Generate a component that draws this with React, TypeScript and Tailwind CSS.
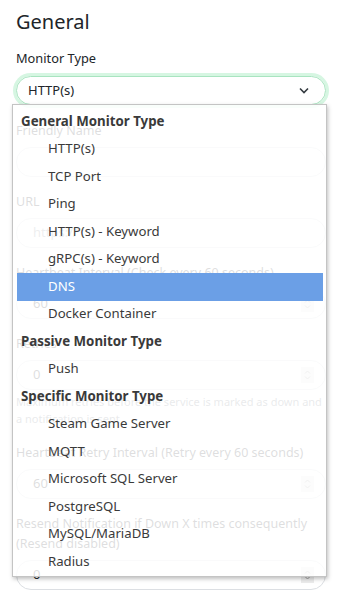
import React from 'react';

type Opt = { label: string; header?: boolean; active?: boolean };

const options: Opt[] = [
  { label: 'General Monitor Type', header: true },
  { label: 'HTTP(s)' },
  { label: 'TCP Port' },
  { label: 'Ping' },
  { label: 'HTTP(s) - Keyword' },
  { label: 'gRPC(s) - Keyword' },
  { label: 'DNS', active: true },
  { label: 'Docker Container' },
  { label: 'Passive Monitor Type', header: true },
  { label: 'Push' },
  { label: 'Specific Monitor Type', header: true },
  { label: 'Steam Game Server' },
  { label: 'MQTT' },
  { label: 'Microsoft SQL Server' },
  { label: 'PostgreSQL' },
  { label: 'MySQL/MariaDB' },
  { label: 'Radius' },
];

function Spinner() {
  return (
    <div className="flex h-[16px] w-[13px] flex-col items-center justify-center bg-[#ececec]">
      <svg width="7" height="12" viewBox="0 0 7 12" fill="none" stroke="#9a9a9a" strokeWidth="1">
        <path d="M1 4.5 3.5 2 6 4.5" />
        <path d="M1 7.5 3.5 10 6 7.5" />
      </svg>
    </div>
  );
}

function Field({ label, value, placeholder, number }: { label: React.ReactNode; value?: string; placeholder?: string; number?: boolean }) {
  return (
    <div className="mb-[15px]">
      <div className="mb-[6px] text-[12.5px] leading-[20px] text-[#212529]">{label}</div>
      <div className="flex h-[30px] items-center justify-between rounded-full border border-[#dcdfe3] pl-[16px] pr-[11px] text-[13px]">
        {value ? <span className="text-[#212529]">{value}</span> : <span className="text-[#8a8f95]">{placeholder}</span>}
        {number && <Spinner />}
      </div>
    </div>
  );
}

export default function App() {
  return (
    <div className="relative h-[600px] w-[342px] overflow-hidden bg-white font-['Noto_Sans',sans-serif]">
      <div className="px-4 pt-[8px]">
        <h1 className="text-[20px] leading-[28px] text-[#212529]">General</h1>

        <div className="mt-[12px] text-[12.8px] leading-[20px] text-[#212529]">Monitor Type</div>
        <div className="mt-[8px] flex h-[29px] items-center justify-between rounded-full border border-[#a9e4c0] pl-[11px] pr-[16px] text-[13px] text-[#212529] shadow-[0_0_0_3px_rgba(92,221,139,0.25)]">
          <span>HTTP(s)</span>
          <svg width="10" height="7" viewBox="0 0 10 7" fill="none" stroke="#343a40" strokeWidth="1.6">
            <path d="M1 1.5 5 5.5 9 1.5" />
          </svg>
        </div>

        <div className="mt-[16px]">
          <Field label="Friendly Name" />
          <Field label="URL" placeholder="https://" />
          <Field label="Heartbeat Interval (Check every 60 seconds)" value="60" number />
          <div className="mb-[16px]">
            <div className="mb-[6px] text-[12.5px] leading-[20px] text-[#212529]">Retries</div>
            <div className="flex h-[30px] items-center justify-between rounded-full border border-[#dcdfe3] pl-[16px] pr-[11px] text-[13px]">
              <span className="text-[#212529]">0</span>
              <Spinner />
            </div>
            <div className="mt-[3px] text-[11px] leading-[17px] text-[#6c757d]">
              Maximum retries before the service is marked as down and a notification is sent
            </div>
          </div>
          <Field label="Heartbeat Retry Interval (Retry every 60 seconds)" value="60" number />
          <Field label="Resend Notification if Down X times consequently (Resend disabled)" value="0" number />
        </div>
      </div>

      <div className="absolute left-[12px] top-[104px] h-[473px] w-[315px] border border-[#c4c4c4] bg-white/85 pb-[2px] pl-[4px] pr-[3px] pt-[3px] shadow-[1px_2px_4px_rgba(0,0,0,0.25)]">
        {options.map((o) => (
          <div
            key={o.label}
            className={
              o.header
                ? 'flex h-[27.5px] items-center pl-[4px] text-[13.3px] font-bold text-[#3a3a3a]'
                : o.active
                ? 'flex h-[27.5px] items-center bg-[#6b9fe6] pl-[31px] text-[13.2px] text-white'
                : 'flex h-[27.5px] items-center pl-[31px] text-[13.2px] text-[#3a3a3a]'
            }
          >
            {o.label}
          </div>
        ))}
      </div>
    </div>
  );
}
